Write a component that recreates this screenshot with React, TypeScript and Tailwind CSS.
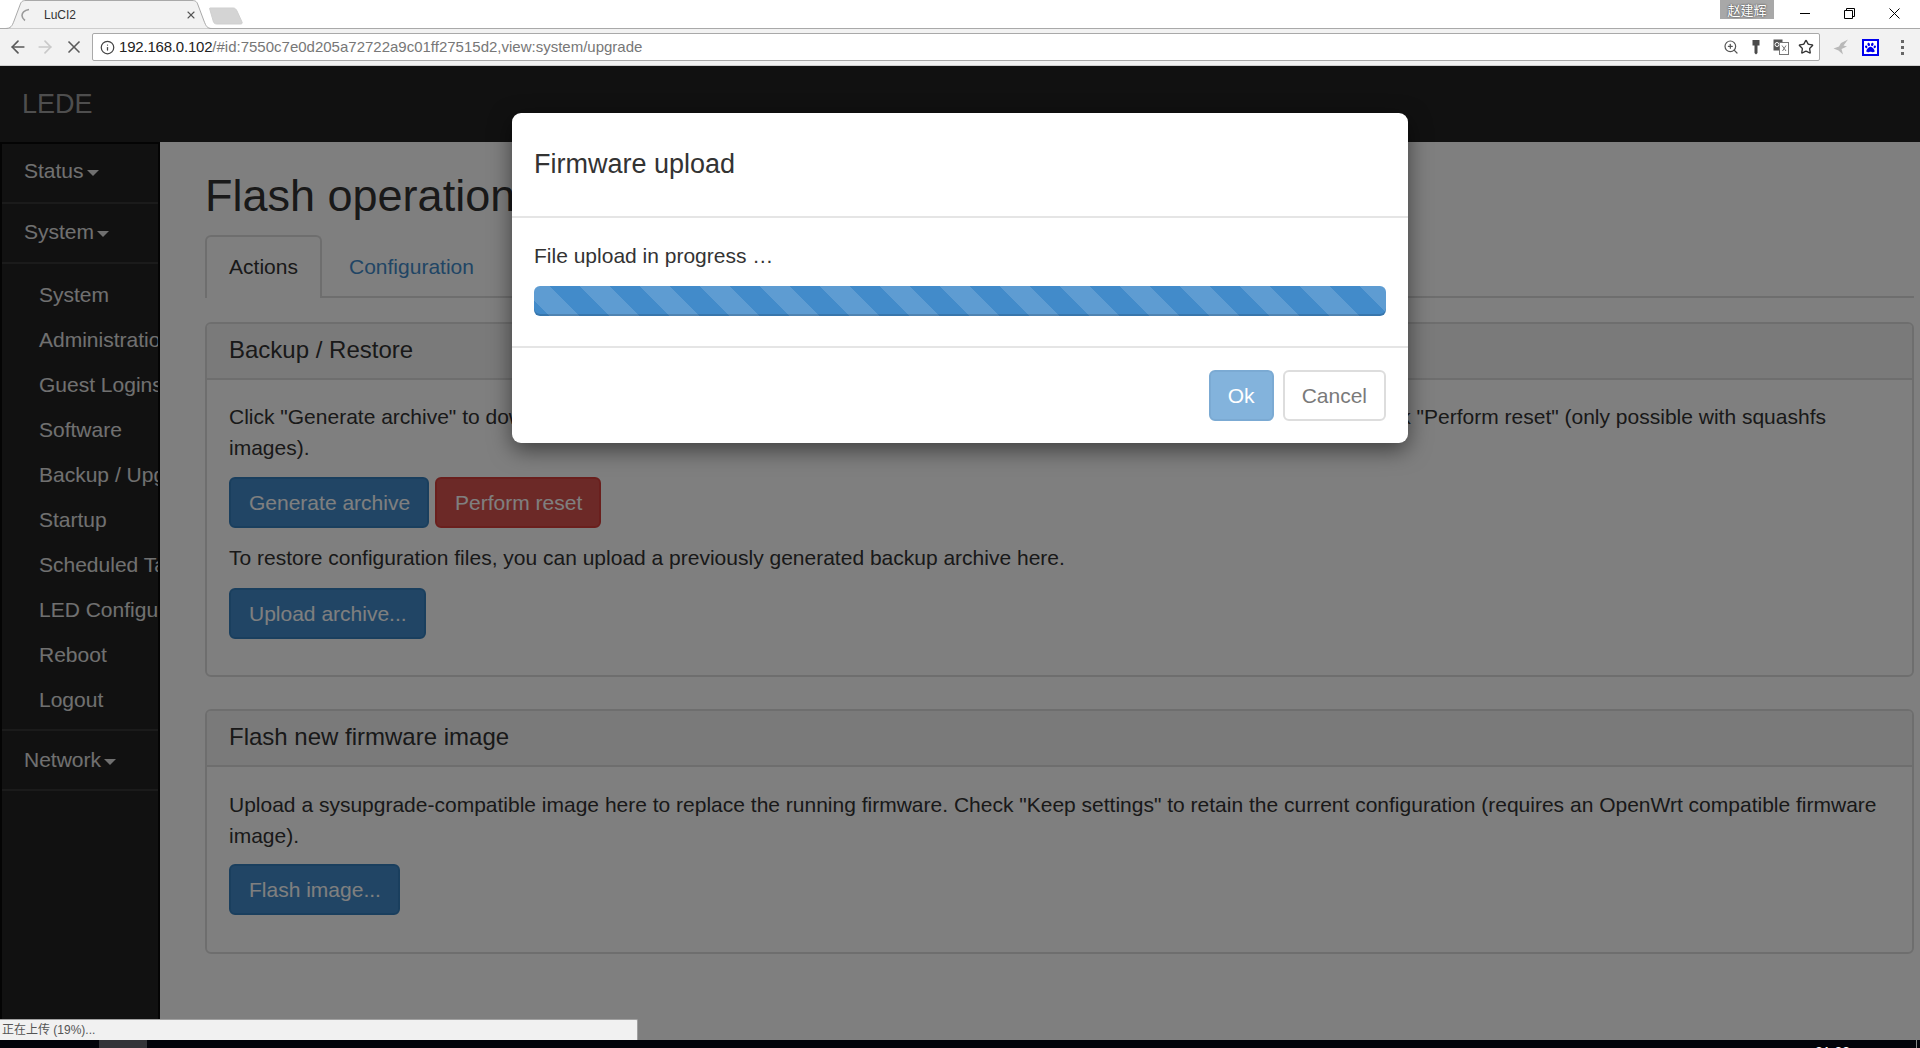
import { ArrowLeft, ArrowRight, Info, Star, X, ZoomIn } from "lucide-react";
import { FaPaw } from "react-icons/fa";

const subItems = [
  "System",
  "Administration",
  "Guest Logins",
  "Software",
  "Backup / Upgrade",
  "Startup",
  "Scheduled Tasks",
  "LED Configuration",
  "Reboot",
  "Logout",
];

function TabStrip() {
  return (
    <div className="flex h-[29px] items-start border-b border-[#a9a9a9] bg-white pl-[5px]">
      <div className="relative -mb-px flex h-[29px] w-[207px] items-center pl-[39px] pr-[15px]">
        <svg className="absolute inset-0" width="207" height="29" viewBox="0 0 207 29">
          <path d="M0 28.5 C6 28.5 7 26 9 21 L15 5 C16 2 17 .5 21 .5 L187 .5 C191 .5 192 2 193 5 L199 21 C201 26 202 28.5 207 28.5" fill="#f2f2f2" stroke="#a9a9a9" />
        </svg>
        <svg className="absolute left-[15px] top-[8px]" width="12" height="14" viewBox="0 0 12 14">
          <path d="M9 1.5 C4 2.5 2 5 2 7.5 C2 9.5 3 11 5 12.5" fill="none" stroke="#9a9a9a" strokeWidth="1.6" />
        </svg>
        <span className="relative flex-1 text-[12px] text-[#333]">LuCI2</span>
        <X className="relative text-[#555]" size={12} strokeWidth={2.2} />
      </div>
      <svg className="mt-[7px] -ml-[3px]" width="36" height="18" viewBox="0 0 36 18">
        <path d="M1 1 L24 1 C26 1 27 2 28 4 L33 15 C33.500 16.500 33 17 31 17 L8 17 C6 17 5 16 4.500 15 L1 3 C.5 1.500 .5 1 1 1 Z" fill="#d4d4d4" stroke="#cfcfcf" />
      </svg>
      <div className="ml-auto flex items-start">
        <span className="mr-[8px] flex h-[19px] w-[54px] items-center justify-center bg-[#a8a8a8] font-['Noto_Sans_CJK_SC',sans-serif] text-[13px] leading-none text-white [text-shadow:0_0_2px_#222]">
          赵建辉
        </span>
        <div className="flex h-[26px] w-[45px] items-center justify-center">
          <span className="h-px w-[10px] bg-black" />
        </div>
        <div className="flex h-[26px] w-[45px] items-center justify-center">
          <svg width="11" height="11" viewBox="0 0 11 11">
            <path d="M.5 2.500 H8.500 V10.500 H.5 Z M2.500 2.500 V.5 H10.500 V8.500 H8.500" fill="none" stroke="#000" />
          </svg>
        </div>
        <div className="mr-[3px] flex h-[26px] w-[45px] items-center justify-center">
          <svg width="11" height="11" viewBox="0 0 11 11">
            <path d="M.5 .5 L10.500 10.500 M10.500 .5 L.5 10.500" stroke="#000" />
          </svg>
        </div>
      </div>
    </div>
  );
}

function Toolbar() {
  return (
    <div className="flex h-[37px] items-center border-b border-[#d0d0d0] bg-[#f2f2f2]">
      <div className="flex w-[92px] items-center pl-[8px] text-[#5a5a5a]">
        <ArrowLeft size={20} strokeWidth={2} />
        <ArrowRight className="ml-[7px] text-[#c9c9c9]" size={20} strokeWidth={2} />
        <X className="ml-[9px]" size={20} strokeWidth={2} />
      </div>
      <div className="flex h-[28px] flex-1 items-center rounded-[2px] border border-[#a9a9a9] bg-white pl-[7px] pr-[5px]">
        <Info className="text-[#444]" size={15} strokeWidth={2} />
        <span className="ml-[4px] flex-1 text-[15px] text-[#777]">
          <span className="tracking-[-0.2px] text-[#222]">192.168.0.102</span>/#id:7550c7e0d205a72722a9c01ff27515d2,view:system/upgrade
        </span>
        <div className="flex items-center gap-[9px] text-[#555]">
          <ZoomIn size={16} strokeWidth={1.8} />
          <svg width="16" height="16" viewBox="0 0 16 16">
            <path d="M4.500 1 H11.500 V6.500 H9.500 V14 L8 15.500 L6.500 14 V6.500 H4.500 Z" fill="#4a4a4a" />
          </svg>
          <svg width="16" height="16" viewBox="0 0 16 16">
            <rect x="0.500" y="0.500" width="9" height="11" fill="#555" />
            <rect x="6.500" y="3.500" width="9" height="12" fill="#fff" stroke="#777" />
            <path d="M9 6.500 L13 12 M13 6.500 L9.500 12" stroke="#777" />
            <circle cx="4" cy="5.500" r="2" fill="none" stroke="#fff" />
          </svg>
          <Star className="text-[#333]" size={16} strokeWidth={2} />
        </div>
      </div>
      <div className="flex w-[100px] items-center pl-[13px]">
        <svg width="16" height="16" viewBox="0 0 16 16">
          <path d="M15 0.500 L10.500 6.500 L14 7.500 L8.500 10 L10 15.500 L5.500 11.500 L0.500 9.500 L6 7.500 L8 4 Z" fill="#b9b9b9" />
        </svg>
        <div className="ml-[13px] flex h-[17px] w-[17px] items-center justify-center border-2 border-[#0000ee] bg-white text-[#0000ee]">
          <FaPaw size={11} />
        </div>
        <div className="ml-[22px] flex flex-col gap-[3px]">
          <span className="h-[3px] w-[3px] bg-[#666]" />
          <span className="h-[3px] w-[3px] bg-[#666]" />
          <span className="h-[3px] w-[3px] bg-[#666]" />
        </div>
      </div>
    </div>
  );
}

function TopItem({ label, lift }: { label: string; lift: string }) {
  return (
    <div className={`flex h-[60px] items-center border-b-2 border-[#363636] pl-[22px] text-[#e0e0e0] ${lift}`}>
      {label}
      <span className="ml-[3px] mt-[3px] h-0 w-0 border-x-[6px] border-t-[6px] border-x-transparent border-t-[#e0e0e0]" />
    </div>
  );
}

function Sidebar() {
  return (
    <aside className="h-full w-[160px] shrink-0 overflow-hidden whitespace-nowrap border-l-2 border-r-2 border-t-2 border-[#080808] bg-[#222] text-[21px]">
      <TopItem label="Status" lift="pb-[4px]" />
      <TopItem label="System" lift="pb-[2px]" />
      <ul className="flex flex-col border-b-2 border-[#363636] pb-[7px] pl-[37px] pt-[8px]">
        {subItems.map((item) => (
          <li key={item} className="flex h-[45px] items-center text-[#e0e0e0]">
            {item}
          </li>
        ))}
      </ul>
      <TopItem label="Network" lift="pb-0" />
    </aside>
  );
}

function Btn({ label, danger }: { label: string; danger?: boolean }) {
  return (
    <span
      className={
        danger
          ? "inline-flex h-[51px] items-center rounded-[6px] border-2 border-[#d43f3a] bg-[#d9534f] pl-[18px] pr-[17px] text-white"
          : "inline-flex h-[51px] items-center rounded-[6px] border-2 border-[#357ebd] bg-[#428bca] pl-[18px] pr-[17px] text-white"
      }
    >
      {label}
    </span>
  );
}

function Panel({ title, children }: { title: string; children: React.ReactNode }) {
  return (
    <section className="rounded-[6px] border-2 border-[#ddd] bg-white">
      <h3 className="flex h-[56px] items-center rounded-t-[4px] border-b-2 border-[#ddd] bg-[#f5f5f5] pb-[2px] pl-[22px] text-[24px]">
        {title}
      </h3>
      <div className="px-[22px] pt-[21px]">{children}</div>
    </section>
  );
}

function MainContent() {
  return (
    <main className="h-full flex-1 overflow-hidden bg-white pl-[45px] pr-[6px] text-[21px] leading-[30px] text-[#333]">
      <h1 className="mt-[24px] whitespace-nowrap text-[45px] leading-[59px]">Flash operations</h1>
      <div className="mt-[10px] flex h-[63px] border-b-2 border-[#ddd]">
        <div className="-mb-[2px] flex h-[63px] w-[117px] items-center justify-center rounded-t-[6px] border-2 border-b-0 border-[#ddd] bg-white pb-[2px]">
          Actions
        </div>
        <div className="ml-[27px] flex h-[63px] items-center text-[#428bca]">Configuration</div>
      </div>
      <div className="mt-[24px] flex flex-col gap-[32px]">
        <Panel title="Backup / Restore">
          <p className="mb-[14px] leading-[31px]">
            Click "Generate archive" to download a tar archive of the current configuration files. To reset the firmware to its initial state, click "Perform reset" (only possible with squashfs images).
          </p>
          <div className="flex gap-[6px]">
            <Btn label="Generate archive" />
            <Btn label="Perform reset" danger />
          </div>
          <p className="mb-[15px] mt-[14px] leading-[31px]">To restore configuration files, you can upload a previously generated backup archive here.</p>
          <Btn label="Upload archive..." />
          <div className="h-[36px]" />
        </Panel>
        <Panel title="Flash new firmware image">
          <p className="mb-[13px] mt-px leading-[31px]">
            Upload a sysupgrade-compatible image here to replace the running firmware. Check "Keep settings" to retain the current configuration (requires an OpenWrt compatible firmware image).
          </p>
          <Btn label="Flash image..." />
          <div className="h-[37px]" />
        </Panel>
      </div>
    </main>
  );
}

function UploadModal() {
  return (
    <div className="absolute inset-0 flex justify-center bg-black/50 pt-[47px]">
      <div className="h-[330px] w-[896px] rounded-[9px] bg-white text-[21px] text-[#333] shadow-[0_7px_22px_rgba(0,0,0,0.5)]">
        <div className="flex h-[105px] items-center border-b-2 border-[#e5e5e5] px-[22px] text-[27px]">Firmware upload</div>
        <div className="h-[130px] border-b-2 border-[#e5e5e5] px-[22px] pt-[23px]">
          <p className="leading-[30px]">File upload in progress …</p>
          <div className="mt-[15px] h-[30px] rounded-[6px] bg-[#428bca] bg-[linear-gradient(45deg,rgba(255,255,255,0.15)_25%,transparent_25%,transparent_50%,rgba(255,255,255,0.15)_50%,rgba(255,255,255,0.15)_75%,transparent_75%,transparent)] bg-[size:60px_60px] bg-[position:46px_0] shadow-[inset_0_-2px_0_rgba(0,0,0,0.15)]" />
        </div>
        <div className="flex justify-end gap-[9px] px-[22px] pt-[22px]">
          <span className="inline-flex h-[51px] items-center rounded-[6px] border-2 border-[#357ebd] bg-[#428bca] px-[17px] text-white opacity-65">Ok</span>
          <span className="inline-flex h-[51px] items-center rounded-[6px] border-2 border-[#ccc] bg-white px-[17px] opacity-65">Cancel</span>
        </div>
      </div>
    </div>
  );
}

export default function App() {
  return (
    <div className="flex h-[1048px] w-[1920px] flex-col overflow-hidden bg-white font-['Liberation_Sans',Arial,sans-serif]">
      <TabStrip />
      <Toolbar />
      <div className="relative flex min-h-0 flex-1 flex-col overflow-hidden">
        <div className="flex h-[76px] shrink-0 items-center bg-[#222] pl-[22px] text-[27px] text-[#9d9d9d]">LEDE</div>
        <div className="flex min-h-0 flex-1">
          <Sidebar />
          <MainContent />
        </div>
        <UploadModal />
        <div className="absolute bottom-0 left-0 flex h-[21px] w-[638px] items-center rounded-tr-[2px] border-r border-t border-[#a0a0a0] bg-[#f1f1f1] pl-[2px] font-['Liberation_Sans','Noto_Sans_CJK_SC',sans-serif] text-[12px] text-[#555]">
          正在上传 (19%)...
        </div>
      </div>
      <div className="flex h-[8px] shrink-0 overflow-hidden bg-[#02030a]">
        <span className="ml-[99px] h-full w-[48px] bg-[#333338]" />
        <span className="ml-[1668px] pt-[5px] text-[14px] leading-none text-white">21:38</span>
        <span className="ml-auto mr-[3px] h-full w-px bg-[#888]" />
      </div>
    </div>
  );
}
